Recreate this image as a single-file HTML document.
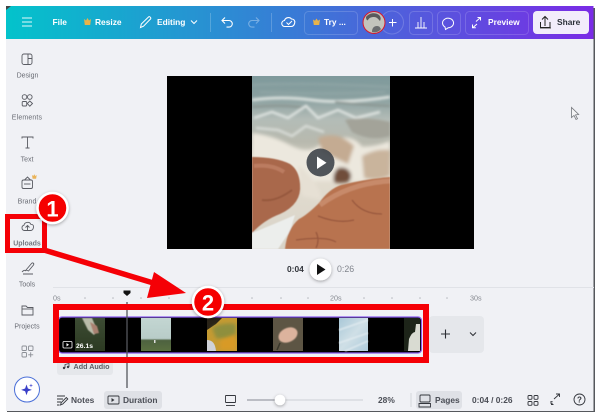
<!DOCTYPE html>
<html><head><meta charset="utf-8">
<style>
html,body{margin:0;padding:0;background:#fff;width:600px;height:418px;overflow:hidden}
svg{display:block;filter:blur(.3px)}
text{font-family:"Liberation Sans",sans-serif}
</style></head><body>
<svg width="600" height="418" viewBox="0 0 600 418" xmlns="http://www.w3.org/2000/svg">
<defs>
<linearGradient id="bar" x1="0" x2="1" y1="0" y2="0"><stop offset="0" stop-color="#03c3cb"/><stop offset=".5" stop-color="#3a79d6"/><stop offset="1" stop-color="#7a2be6"/></linearGradient>
<linearGradient id="sea" x1="0" x2="0" y1="0" y2="1"><stop offset="0" stop-color="#7f9a9c"/><stop offset=".13" stop-color="#8aa0a0"/><stop offset=".25" stop-color="#b3bcb7"/><stop offset=".38" stop-color="#b8b9ae"/><stop offset=".55" stop-color="#e3ddd0"/><stop offset="1" stop-color="#d8d3c8"/></linearGradient>
<linearGradient id="green" x1="0" x2="0" y1="0" y2="1"><stop offset="0" stop-color="#3c4b33"/><stop offset="1" stop-color="#2c3a22"/></linearGradient>
<linearGradient id="sky" x1="0" x2="0" y1="0" y2="1"><stop offset="0" stop-color="#c3d6d2"/><stop offset=".62" stop-color="#b8ccc8"/><stop offset=".68" stop-color="#4e6240"/><stop offset="1" stop-color="#5a7040"/></linearGradient>
<linearGradient id="ice" x1="0" x2="1" y1="0" y2="1"><stop offset="0" stop-color="#a9c8d8"/><stop offset=".5" stop-color="#cfdfe6"/><stop offset="1" stop-color="#aecbdb"/></linearGradient>
<filter id="b1" x="-20%" y="-20%" width="140%" height="140%"><feGaussianBlur stdDeviation="1.800"/></filter>
<filter id="b2"><feGaussianBlur stdDeviation=".6"/></filter>
<filter id="b3" x="-10%" y="-20%" width="120%" height="140%"><feGaussianBlur stdDeviation="1.200"/></filter>
<filter id="sh" x="-30%" y="-30%" width="160%" height="160%"><feDropShadow dx="0" dy="1" stdDeviation="1.5" flood-color="#000" flood-opacity=".35"/></filter>
<clipPath id="vid"><rect x="252" y="76" width="138" height="173"/></clipPath>
<clipPath id="th1"><rect x="75" y="318" width="30" height="33"/></clipPath>
<clipPath id="th3"><rect x="207" y="318" width="30" height="33"/></clipPath>
<clipPath id="th4"><rect x="273" y="318" width="30" height="33"/></clipPath>
<clipPath id="th6"><rect x="404" y="318" width="16" height="33"/></clipPath>
</defs>

<!-- window -->
<rect x="7" y="8" width="588" height="404" fill="#55585c"/>
<rect x="6" y="6" width="587.5" height="405" fill="#f0f1f5"/>
<rect x="6" y="6" width="587.5" height="33" fill="url(#bar)"/>
<path d="M6 6h5l-5 4z" fill="#444"/>

<!-- top bar -->
<g stroke="#fff" stroke-width="1" fill="none" opacity=".9"><path d="M22 18h10M22 22h10M22 26h10"/></g>
<g font-weight="700" font-size="8.400" fill="#fff">
<text x="52.500" y="25">File</text>
<text x="95" y="25">Resize</text>
<text x="157" y="25">Editing</text>
<text x="324" y="25">Try ...</text>
<text x="488" y="25">Preview</text>
</g>
<path d="M84 19l2 1.500 1.500-2.500 1.500 2.500 2-1.500-.8 6h-5.400z" fill="#e8b34a"/>
<path d="M140.500 27.500l.8-3.500 7.200-7c1-1 3 .8 2 2l-7 7.200z" fill="none" stroke="#fff" stroke-width="1"/>
<path d="M191 20.500l3 3 3-3" fill="none" stroke="#fff" stroke-width="1"/>
<path d="M210.500 13v19M271.500 13v19" stroke="#fff" stroke-opacity=".2"/>
<path d="M225 17.500l-3 3 3 3M222 20.500h7a3.300 3.300 0 0 1 0 6.600h-2.500" fill="none" stroke="#fff" stroke-width="1.100"/>
<path d="M256 17.500l3 3-3 3M259 20.500h-7a3.300 3.300 0 0 0 0 6.600h2.500" fill="none" stroke="#fff" stroke-opacity=".35" stroke-width="1.100"/>
<path d="M285 26.500a3 3 0 0 1-.500-6c.800-3 5-4 7-1.500 2.500 0 3.800 2 3.200 4-.4 2-1.700 3.500-3.700 3.500z" fill="none" stroke="#fff" stroke-width="1.100"/>
<path d="M286.500 22.500l2 2 3.500-3.500" fill="none" stroke="#fff" stroke-width="1"/>
<rect x="304.500" y="11.500" width="53" height="23" rx="4" fill="none" stroke="#fff" stroke-opacity=".16"/>
<path d="M313 19.500l2 1.300 1.500-2.300 1.500 2.300 2-1.300-.8 5.500h-5.400z" fill="#e8b34a"/>
<circle cx="392" cy="22.500" r="11.500" fill="none" stroke="#fff" stroke-opacity=".18"/>
<path d="M392.500 19v7.500M389 22.500h7.500" stroke="#fff" stroke-width="1"/>
<circle cx="374" cy="22.500" r="11" fill="#c3c4bc" stroke="#d8192a" stroke-width="1"/>
<path d="M366 17c3-4 9-5 13-2 2 2 2 4 1 6-2-2-3-4-6-4s-5 1-6 3c-1 1-2-1-2-3z" fill="#5a5a5c"/>
<path d="M372 32c0-4 2-6 5-6s3 2 4 3c-2 3-6 4-9 3z" fill="#6a6c6e"/>
<rect x="409.500" y="11.500" width="23" height="23" rx="4" fill="none" stroke="#fff" stroke-opacity=".16"/>
<path d="M415 28h12M418 28v-6M421 28V17M424 28v-6" stroke="#fff" fill="none" stroke-width=".9"/>
<rect x="437.500" y="11.500" width="23" height="23" rx="4" fill="none" stroke="#fff" stroke-opacity=".16"/>
<path d="M445 27a5.500 4.800 0 1 1 3.200 .8l-2.700 1.700z" fill="none" stroke="#fff" stroke-width="1"/>
<rect x="465.500" y="11.500" width="63" height="23" rx="4" fill="none" stroke="#fff" stroke-opacity=".16"/>
<path d="M476 21.500l4.500-4M477.500 17.500h3v3M477 24l-4 3.500M472.500 24.500v3.300h3.300" fill="none" stroke="#fff" stroke-width="1"/>
<rect x="533" y="11" width="56" height="23" rx="4" fill="#f2ecfb"/>
<path d="M545 26v-9M542 19.500l3-3 3 3M540.500 22v5.500h9.500V22" fill="none" stroke="#222" stroke-width="1"/>
<path d="M540 28h11" stroke="#222" stroke-width=".8"/>
<text x="557" y="25" font-size="8.400" font-weight="700" fill="#2b2f38">Share</text>

<!-- sidebar icons -->
<g fill="none" stroke="#5a5c63" stroke-width=".9">
<rect x="22" y="54" width="10" height="10.500" rx="2"/><path d="M28 54v10.500M28 58.500h4"/>
<circle cx="24.500" cy="97" r="2.300"/><circle cx="29.800" cy="97" r="2.300"/><rect x="22.200" y="101.500" width="4.500" height="4.500" rx="1"/><path d="M29.800 101l2.700 2.500-2.700 2.700-2.500-2.700z"/>
<path d="M22 138.500v-1.500h11v1.500M27.500 137v11M25.500 148h4"/>
<path d="M24.500 180l3-3 3 3"/><rect x="22" y="180" width="10.500" height="8.500" rx="1.500"/><path d="M24 184h6.500"/>
<path d="M24.500 230.500a2.700 2.700 0 0 1-.5-5.300c.4-3.200 5.500-4 6.800-.9 2.100 0 3 1.200 2.700 3-.3 1.800-1.300 3.200-3 3.200z"/><path d="M27.500 231v-5.500M25.500 227.500l2-2 2 2"/>
<path d="M26 270l5.500-6.500c1-1.500 3 0 2 1.500l-5 6zM22 272c1.500-2 3-2 4-1M23 274h10"/>
<path d="M22 306h4l1.500 1.500H33V315H22z"/><path d="M22 309h11"/>
</g>
<g fill="none" stroke="#8b8e95" stroke-width=".9">
<rect x="22" y="346" width="4.500" height="4.500" rx="1"/><rect x="28.500" y="346" width="4.500" height="4.500" rx="1"/><rect x="22" y="352.500" width="4.500" height="4.500" rx="1"/><path d="M30.700 352.300v5M28.200 354.800h5"/>
</g>
<path d="M32 175l1.300 1 1-1.800 1 1.800 1.400-1-.6 3.800h-3.500z" fill="#eab45a"/>
<g font-size="7" fill="#6a6d75" text-anchor="middle">
<text x="27.500" y="77.500">Design</text>
<text x="27" y="119.500" letter-spacing=".15">Elements</text>
<text x="27" y="161.500">Text</text>
<text x="27" y="203.500">Brand</text>
<text x="27" y="245.500" font-weight="700" fill="#757880">Uploads</text>
<text x="27" y="286.500">Tools</text>
<text x="27" y="328.500">Projects</text>
</g>
<circle cx="27" cy="389.500" r="12.500" fill="#fff" stroke="#4a6fd8" stroke-width="1"/>
<path d="M26.500 384.500l1.400 4 4 1.400-4 1.400-1.400 4-1.400-4-4-1.400 4-1.400z" fill="#3a3fc8"/>
<path d="M31 383.500l.5 1.500 1.500 .5-1.500 .5-.5 1.500-.5-1.500-1.500-.5 1.500-.5z" fill="#5a5fd8"/>

<!-- video -->
<rect x="167" y="76" width="307" height="173" fill="#000"/>
<g clip-path="url(#vid)">
<rect x="252" y="76" width="138" height="173" fill="url(#sea)"/>
<g filter="url(#b3)" fill="none">
<path d="M252 85q50-3 138 2M260 92q50 3 125 0" stroke="#92a7a7" stroke-width="1.500"/>
<path d="M252 100q30-4 60 0t78-3" stroke="#d9e0dd" stroke-width="3"/>
<path d="M252 107q30-3 55 1M335 102q30 3 55 4" stroke="#8a9490" stroke-width="2"/>
<path d="M254 118l18-6 16 6 18-12 12 12 20-8 18 8 24-6" stroke="#dfe4e1" stroke-width="2.500"/>
<path d="M256 128l22 2 14 6 14-10 18 6" stroke="#d8dcd7" stroke-width="2.500"/>
<path d="M345 120q20-4 45 2v14q-20 6-38-4z" fill="#a3a399" stroke="none"/>
</g>
<g filter="url(#b1)">
<path d="M252 133q20 2 38 12t30 0q30-16 42 2 14 0 28-6v40h-138z" fill="#ece8de"/>
<path d="M318 138q20-8 36 8l-6 18-26-12z" fill="#c4ab92"/>
<path d="M362 156q14-8 28-6v26q-14 6-26 2z" fill="#c9b49c"/>
<path d="M338 168q8-2 12 4 3 6-2 10-8 2-14 0-2-8 4-14z" fill="#6f4d3a"/>
<path d="M298 165q20 15 24 35l-20-4z" fill="#e6e0d4"/>
</g>
<g filter="url(#b2)">
<path d="M252 157q24 0 38 7 9 6 10 20 2 20-20 30-16 6-28 19z" fill="#a9684c"/>
<path d="M254 166q18-2 30 6" stroke="#bb7c60" stroke-width="4" fill="none"/>
<path d="M262 200q14 2 30-10" stroke="#96583e" stroke-width="2" fill="none"/>
<path d="M252 233q20-8 43-18l-5 16-12 18h-26z" fill="#eceeec"/>
<path d="M285 249q2-20 14-30 8-4 20-16 10-14 22-18 24-6 49-8v72z" fill="#b8734f"/>
<path d="M320 205q30-22 70-24" stroke="#c78a6b" stroke-width="5" fill="none"/>
<path d="M296 240q30-4 40 2M318 216q20 8 36 4M352 200q10 14 30 14M316 232q4 8 0 16" stroke="#98573d" stroke-width="1.300" fill="none"/>
</g>
</g>
<circle cx="320.500" cy="162.500" r="14" fill="#42484e" fill-opacity=".92"/>
<path d="M317 156.500v12.500l9.500-6.200z" fill="#fff"/>

<!-- playback -->
<text x="287" y="272" font-size="8.400" font-weight="700" fill="#33363c">0:04</text>
<circle cx="320.500" cy="269.500" r="11" fill="#fff" filter="url(#sh)"/>
<path d="M317 264v11l8.500-5.500z" fill="#111"/>
<text x="337" y="272" font-size="8.800" fill="#80848c">0:26</text>

<!-- timeline -->
<path d="M53 287.500h541" stroke="#e0e2e7"/>
<g font-size="7.200" fill="#85888f">
<text x="53" y="300.500">0s</text>
<text x="330" y="300.500">20s</text>
<text x="470" y="300.500">30s</text>
</g>
<g fill="#b5b8be">
<circle cx="85" cy="298" r=".8"/><circle cx="113" cy="298" r=".8"/><circle cx="141" cy="298" r=".8"/><circle cx="169" cy="298" r=".8"/><circle cx="252" cy="298" r=".8"/><circle cx="281" cy="298" r=".8"/><circle cx="308" cy="298" r=".8"/><circle cx="364" cy="298" r=".8"/><circle cx="392" cy="298" r=".8"/><circle cx="420" cy="298" r=".8"/><circle cx="447" cy="298" r=".8"/>
</g>
<rect x="429" y="316" width="55" height="37" rx="4" fill="#e5e7eb"/>
<path d="M445.500 329.500v9M441 334h9" stroke="#2c2f35" stroke-width="1.100"/>
<path d="M470 332.500l3 3 3-3" fill="none" stroke="#2c2f35" stroke-width="1"/>

<!-- strip -->
<rect x="58.500" y="317" width="363" height="36" rx="3.500" fill="#000" stroke="#8b5cf0" stroke-width="1.200"/>
<g clip-path="url(#th1)">
<rect x="75" y="318" width="30" height="33" fill="url(#green)"/>
<path d="M82 318l10 0 5 12-3 5-6-5z" fill="#b9bcaa" filter="url(#b2)"/>
<path d="M90 322l7 4 2 7-5 1z" fill="#a98070" filter="url(#b2)"/>
</g>
<rect x="141" y="318" width="30" height="33" fill="url(#sky)"/>
<rect x="154" y="340" width="1.500" height="3" fill="#ddd"/>
<g clip-path="url(#th3)">
<rect x="207" y="318" width="30" height="33" fill="#c49a32"/>
<path d="M207 318h15l-6 6-9 6z" fill="#2a2418"/>
<path d="M207 340q8 0 9 11h-9z" fill="#cfd2d8"/>
<path d="M212 328q10-6 24-4v14q-12 2-20 0z" fill="#8f8f3e" filter="url(#b1)"/>
<path d="M220 340l16-6v16h-16z" fill="#d89a28" filter="url(#b1)"/>
</g>
<g clip-path="url(#th4)">
<rect x="273" y="318" width="30" height="33" fill="#5d5544"/>
<ellipse cx="288" cy="335" rx="10" ry="7" transform="rotate(-25 288 335)" fill="#dcb39d" filter="url(#b2)"/>
<path d="M280 343l-3 7" stroke="#39362a" stroke-width="1.500"/>
</g>
<rect x="339" y="318" width="29" height="33" fill="url(#ice)"/>
<path d="M339 330l29-10M339 343l29-10M345 351l23-10" stroke="#e4edf1" stroke-width="2" opacity=".6" filter="url(#b2)"/>
<g clip-path="url(#th6)">
<rect x="404" y="318" width="16" height="33" fill="#1d2419"/>
<path d="M408 351l1-12q3-7 6-7l1-8 4 0v27z" fill="#d9dbd2"/>
</g>
<rect x="63" y="341.500" width="9" height="6.500" rx="1" fill="none" stroke="#fff" stroke-width=".8"/>
<path d="M66.500 343v3.500l2.500-1.700z" fill="#fff"/>
<text x="76" y="348" font-size="6.800" font-weight="700" fill="#fff">26.1s</text>

<!-- playhead -->
<path d="M123.500 290.500h7v2.500l-3.500 3-3.500-3z" fill="#111"/>
<path d="M127 302v86" stroke="#55575c" stroke-width="1.300"/>

<!-- add audio -->
<rect x="57" y="358" width="56" height="17" rx="3" fill="#e5e7eb"/>
<path d="M65 368v-3.500l4-1v3.500" fill="none" stroke="#3c3f46" stroke-width=".8"/><circle cx="64" cy="368" r="1.200" fill="#3c3f46"/><circle cx="68" cy="367" r="1.200" fill="#3c3f46"/>
<text x="73.500" y="369" font-size="7.200" font-weight="700" fill="#5a5d65">Add Audio</text>

<!-- bottom bar -->
<rect x="104" y="391" width="58" height="18" rx="3" fill="#dfe1e6"/>
<rect x="416" y="391" width="46" height="18" rx="3" fill="#dfe1e6"/>
<g fill="none" stroke="#33363c" stroke-width=".9">
<path d="M57 396h8M57 399h6M57 402h4M57 405h2.500M60.500 405l.8-2.500 5-5 1.500 1.500-5 5z"/>
<rect x="108" y="396" width="11" height="8" rx="1"/>
<rect x="225.500" y="395.500" width="10" height="7" rx=".5"/><path d="M226 405.500h9"/>
<rect x="420" y="395" width="10" height="7" rx="1"/><path d="M419 403.500h11.500v3.500H419z"/>
<rect x="528" y="395.500" width="4" height="3.800" rx="1"/><rect x="534" y="395.500" width="4" height="3.800" rx="1"/><rect x="528" y="401.500" width="4" height="3.800" rx="1"/><rect x="534" y="401.500" width="4" height="3.800" rx="1"/>
<path d="M554 399l5-4.500M556 394h3.500v3"/>
<circle cx="579.500" cy="399.500" r="5.500"/>
</g>
<path d="M553 401.500l-2.500 2.500v-3zM551 405h3l-3-3z" fill="#33363c"/>
<path d="M111.500 398v4l3-2z" fill="#33363c"/>
<text x="579.500" y="402.500" font-size="8" font-weight="700" fill="#33363c" text-anchor="middle">?</text>
<g font-size="8.400" font-weight="700" fill="#4b4e56">
<text x="71" y="403">Notes</text>
<text x="123" y="403">Duration</text>
<text x="435" y="403">Pages</text>
<text x="378" y="403">28%</text>
<text x="472" y="403">0:04 / 0:26</text>
</g>
<path d="M247 400h33" stroke="#a9acb3" stroke-width="1.500"/>
<path d="M280 400h83" stroke="#cdd0d5" stroke-width="1"/>
<circle cx="280" cy="400" r="5.300" fill="#fff" filter="url(#sh)"/>
<path d="M411 393v14" stroke="#d4d6db"/>

<!-- cursor -->
<path d="M571.500 107.500v10l2.500-2 2 4 1.500-.8-2-3.800 3.200-.4z" fill="#f5f5f6" stroke="#74777c" stroke-width=".8"/>

<!-- annotations -->
<rect x="7.500" y="216.500" width="37" height="34" fill="none" stroke="#f50006" stroke-width="5"/>
<path d="M44 250l116 35" stroke="#f50006" stroke-width="5.500" fill="none"/>
<path d="M154 272l32 21-39 5z" fill="#f50006"/>
<rect x="56" y="307" width="370" height="53" fill="none" stroke="#f50006" stroke-width="6"/>
<circle cx="52.500" cy="208" r="15" fill="#f50006" stroke="#fff" stroke-width="2.500" filter="url(#sh)"/>
<text x="52.500" y="216.500" font-size="22" font-weight="700" fill="#fff" text-anchor="middle">1</text>
<circle cx="208" cy="302" r="15" fill="#f50006" stroke="#fff" stroke-width="2.500" filter="url(#sh)"/>
<text x="208" y="310.500" font-size="22" font-weight="700" fill="#fff" text-anchor="middle">2</text>
</svg>
</body></html>
